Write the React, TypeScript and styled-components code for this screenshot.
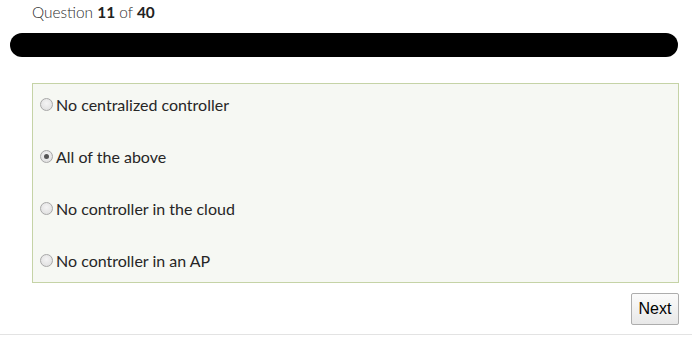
import styled, { createGlobalStyle } from 'styled-components';

const options = [
	{ label: 'No centralized controller', checked: false },
	{ label: 'All of the above', checked: true },
	{ label: 'No controller in the cloud', checked: false },
	{ label: 'No controller in an AP', checked: false },
];

export default function App(): JSX.Element {
	return (
		<Page>
			<GlobalStyle />
			<Header>
				Question <b>11</b> of <b>40</b>
			</Header>
			<Progress />
			<Choices>
				{options.map((option) => (
					<Choice key={option.label}>
						<Radio $checked={option.checked} />
						{option.label}
					</Choice>
				))}
			</Choices>
			<Footer>
				<NextButton>Next</NextButton>
			</Footer>
		</Page>
	);
}

const GlobalStyle = createGlobalStyle`
	body {
		margin: 0;
		background: #fff;
		font-family: Lato, 'Open Sans', sans-serif;
	}
`;

const Page = styled.div`
	width: 692px;
	height: 335px;
	box-sizing: border-box;
	padding: 0 13px 0 10px;
	border-bottom: 1px solid #e3e3e3;
	overflow: hidden;
`;

const Header = styled.div`
	padding: 3px 0 0 22px;
	height: 33px;
	box-sizing: border-box;
	font-size: 15.4px;
	font-weight: 300;
	color: #2e2e2e;
	line-height: 18px;

	b {
		font-weight: 700;
		color: #222;
	}
`;

const Progress = styled.div`
	height: 24px;
	margin-right: 1px;
	border-radius: 12px;
	background: #000;
`;

const Choices = styled.div`
	margin: 26px 0 0 22px;
	height: 200px;
	box-sizing: border-box;
	border: 1px solid #c5d3a6;
	background: #f6f8f3;
	display: flex;
	flex-direction: column;
	padding: 11px 0 0 7px;
	gap: 34px;
`;

const Choice = styled.label`
	display: flex;
	align-items: center;
	gap: 3px;
	height: 18px;
	font-size: 16px;
	color: #262626;
`;

const Radio = styled.span<{ $checked: boolean }>`
	width: 11px;
	height: 11px;
	border-radius: 50%;
	border: 1px solid #a8a8a8;
	background: radial-gradient(circle at 50% 40%, #f4f4f4 0%, #dcdcdc 100%);
	position: relative;

	&::after {
		content: '';
		display: ${(p) => (p.$checked ? 'block' : 'none')};
		position: absolute;
		left: 3px;
		top: 3px;
		width: 5px;
		height: 5px;
		border-radius: 50%;
		background: #555;
	}
`;

const Footer = styled.div`
	display: flex;
	justify-content: flex-end;
	padding-top: 10px;
`;

const NextButton = styled.button`
	width: 48px;
	height: 32px;
	font-family: 'Liberation Sans', Arial, sans-serif;
	font-size: 16px;
	color: #000;
	background: linear-gradient(#fbfbfb, #e8e8e8);
	border: 1px solid #adadad;
	border-radius: 2px;
	padding: 0;
`;
